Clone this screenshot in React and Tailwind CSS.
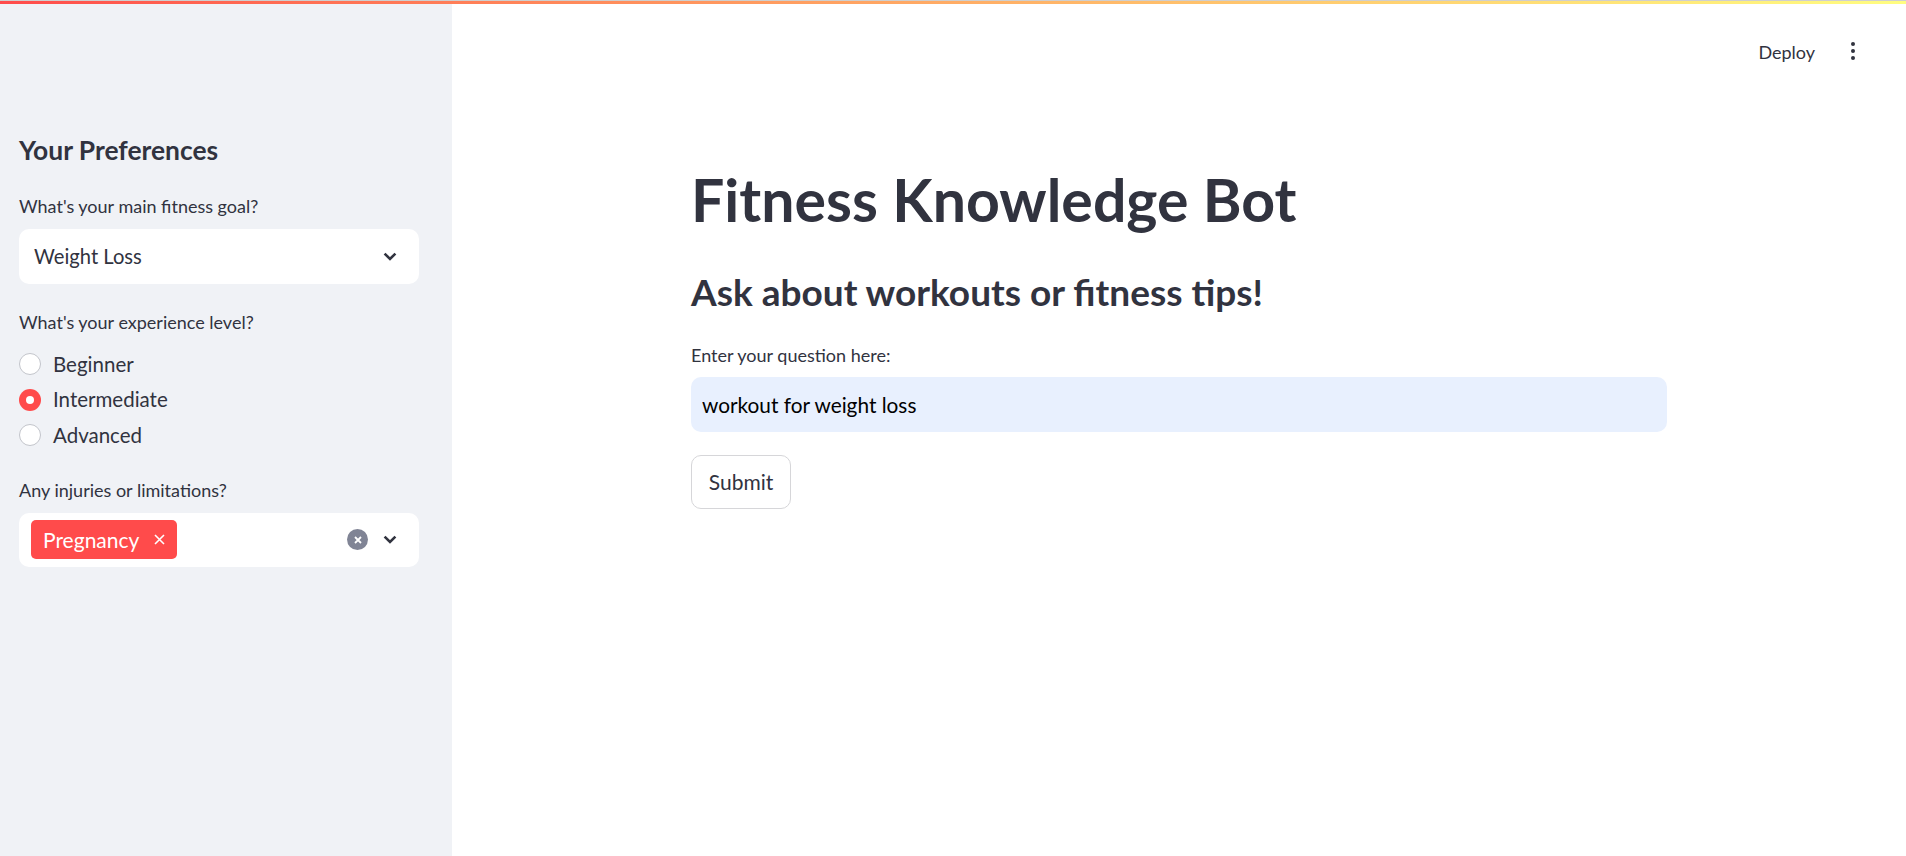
import { useState } from "react";

const levels = ["Beginner", "Intermediate", "Advanced"];

function Chevron() {
    return (
        <svg width="14" height="9" viewBox="0 0 14 9" className="shrink-0">
            <path d="M1.6 1.6 L7 7 L12.4 1.6" fill="none" stroke="#31333f" strokeWidth="2.6" />
        </svg>
    );
}

function Radio({ label, checked, onClick }) {
    return (
        <div onClick={onClick} className="h-[35.5px] flex items-center gap-[12px] cursor-pointer">
            {checked ? (
                <span className="w-[22px] h-[22px] rounded-full bg-[#ff4b4b] flex items-center justify-center">
                    <span className="w-[8px] h-[8px] rounded-full bg-white" />
                </span>
            ) : (
                <span className="w-[22px] h-[22px] rounded-full bg-white border-[1.5px] border-[#c3c5cb]" />
            )}
            <span className="text-[20.5px] leading-[1.2] text-[#31333f]">{label}</span>
        </div>
    );
}

export default function App() {
    const [level, setLevel] = useState("Intermediate");
    const [question, setQuestion] = useState("workout for weight loss");

    return (
        <div className="relative w-full h-[856px] flex font-['Lato',sans-serif] text-[#31333f] overflow-hidden">
            {/* top decoration */}
            <div className="absolute top-0 left-0 right-0 h-[1px] bg-[#cfcfcf]" />
            <div className="absolute top-[1px] left-0 right-0 h-[3px] bg-gradient-to-r from-[#ff4b4b] to-[#fffd80]" />

            <aside className="w-[452px] shrink-0 h-full bg-[#f0f2f6] pt-[135px] pl-[19px] pr-[33px] flex flex-col">
                <h2 className="text-[26.4px] leading-[1.2] font-bold">Your Preferences</h2>

                <p className="mt-[29.5px] text-[18px] leading-[1.2]">What's your main fitness goal?</p>
                <div className="mt-[11px] h-[55px] bg-white rounded-[10px] pl-[15px] pr-[22px] flex items-center justify-between">
                    <span className="text-[20.2px]">Weight Loss</span>
                    <Chevron />
                </div>

                <p className="mt-[28px] text-[18px] leading-[1.2]">What's your experience level?</p>
                <div className="mt-[13px] flex flex-col">
                    {levels.map(l => (
                        <Radio key={l} label={l} checked={level === l} onClick={() => setLevel(l)} />
                    ))}
                </div>

                <p className="mt-[27.5px] text-[18px] leading-[1.2]">Any injuries or limitations?</p>
                <div className="mt-[11px] h-[54px] bg-white rounded-[10px] pl-[12px] pr-[22px] flex items-center">
                    <span className="h-[39px] bg-[#ff4b4b] rounded-[5px] pl-[12px] pr-[12px] flex items-center gap-[15px] text-white">
                        <span className="text-[21px]">Pregnancy</span>
                        <svg width="11" height="11" viewBox="0 0 11 11">
                            <path d="M1 1 L10 10 M10 1 L1 10" stroke="white" strokeWidth="1.6" />
                        </svg>
                    </span>
                    <span className="flex-1" />
                    <span className="w-[21px] h-[21px] rounded-full bg-[#808495] flex items-center justify-center mr-[15px]">
                        <svg width="8" height="8" viewBox="0 0 8 8">
                            <path d="M1 1 L7 7 M7 1 L1 7" stroke="white" strokeWidth="1.8" />
                        </svg>
                    </span>
                    <Chevron />
                </div>
            </aside>

            <main className="flex-1 h-full bg-white flex flex-col">
                <header className="h-[106px] shrink-0 flex items-center justify-end pr-[43px]">
                    <span className="text-[18px] leading-[1.2]">Deploy</span>
                    <span className="ml-[28px] w-[20px] flex flex-col items-center gap-[2.5px] -mt-[4px]">
                        <span className="w-[4.5px] h-[4.5px] rounded-full bg-[#31333f]" />
                        <span className="w-[4.5px] h-[4.5px] rounded-full bg-[#31333f]" />
                        <span className="w-[4.5px] h-[4.5px] rounded-full bg-[#31333f]" />
                    </span>
                </header>

                <div className="w-[976px] mx-auto pt-[59px]">
                    <h1 className="text-[59px] leading-[1.2] font-bold">Fitness Knowledge Bot</h1>
                    <h3 className="mt-[34px] text-[37px] leading-[1.2] font-bold">Ask about workouts or fitness tips!</h3>

                    <p className="mt-[30.5px] text-[18px] leading-[1.2]">Enter your question here:</p>
                    <input
                        value={question}
                        onChange={e => setQuestion(e.target.value)}
                        className="mt-[10.5px] w-full h-[55px] bg-[#e8f0fe] rounded-[10px] px-[11px] text-[20.8px] text-black outline-none"
                    />

                    <button className="mt-[23px] h-[54px] w-[100px] rounded-[10px] border border-[#d6d6d9] bg-white text-[21px] text-[#31333f]">
                        Submit
                    </button>
                </div>
            </main>
        </div>
    );
}
